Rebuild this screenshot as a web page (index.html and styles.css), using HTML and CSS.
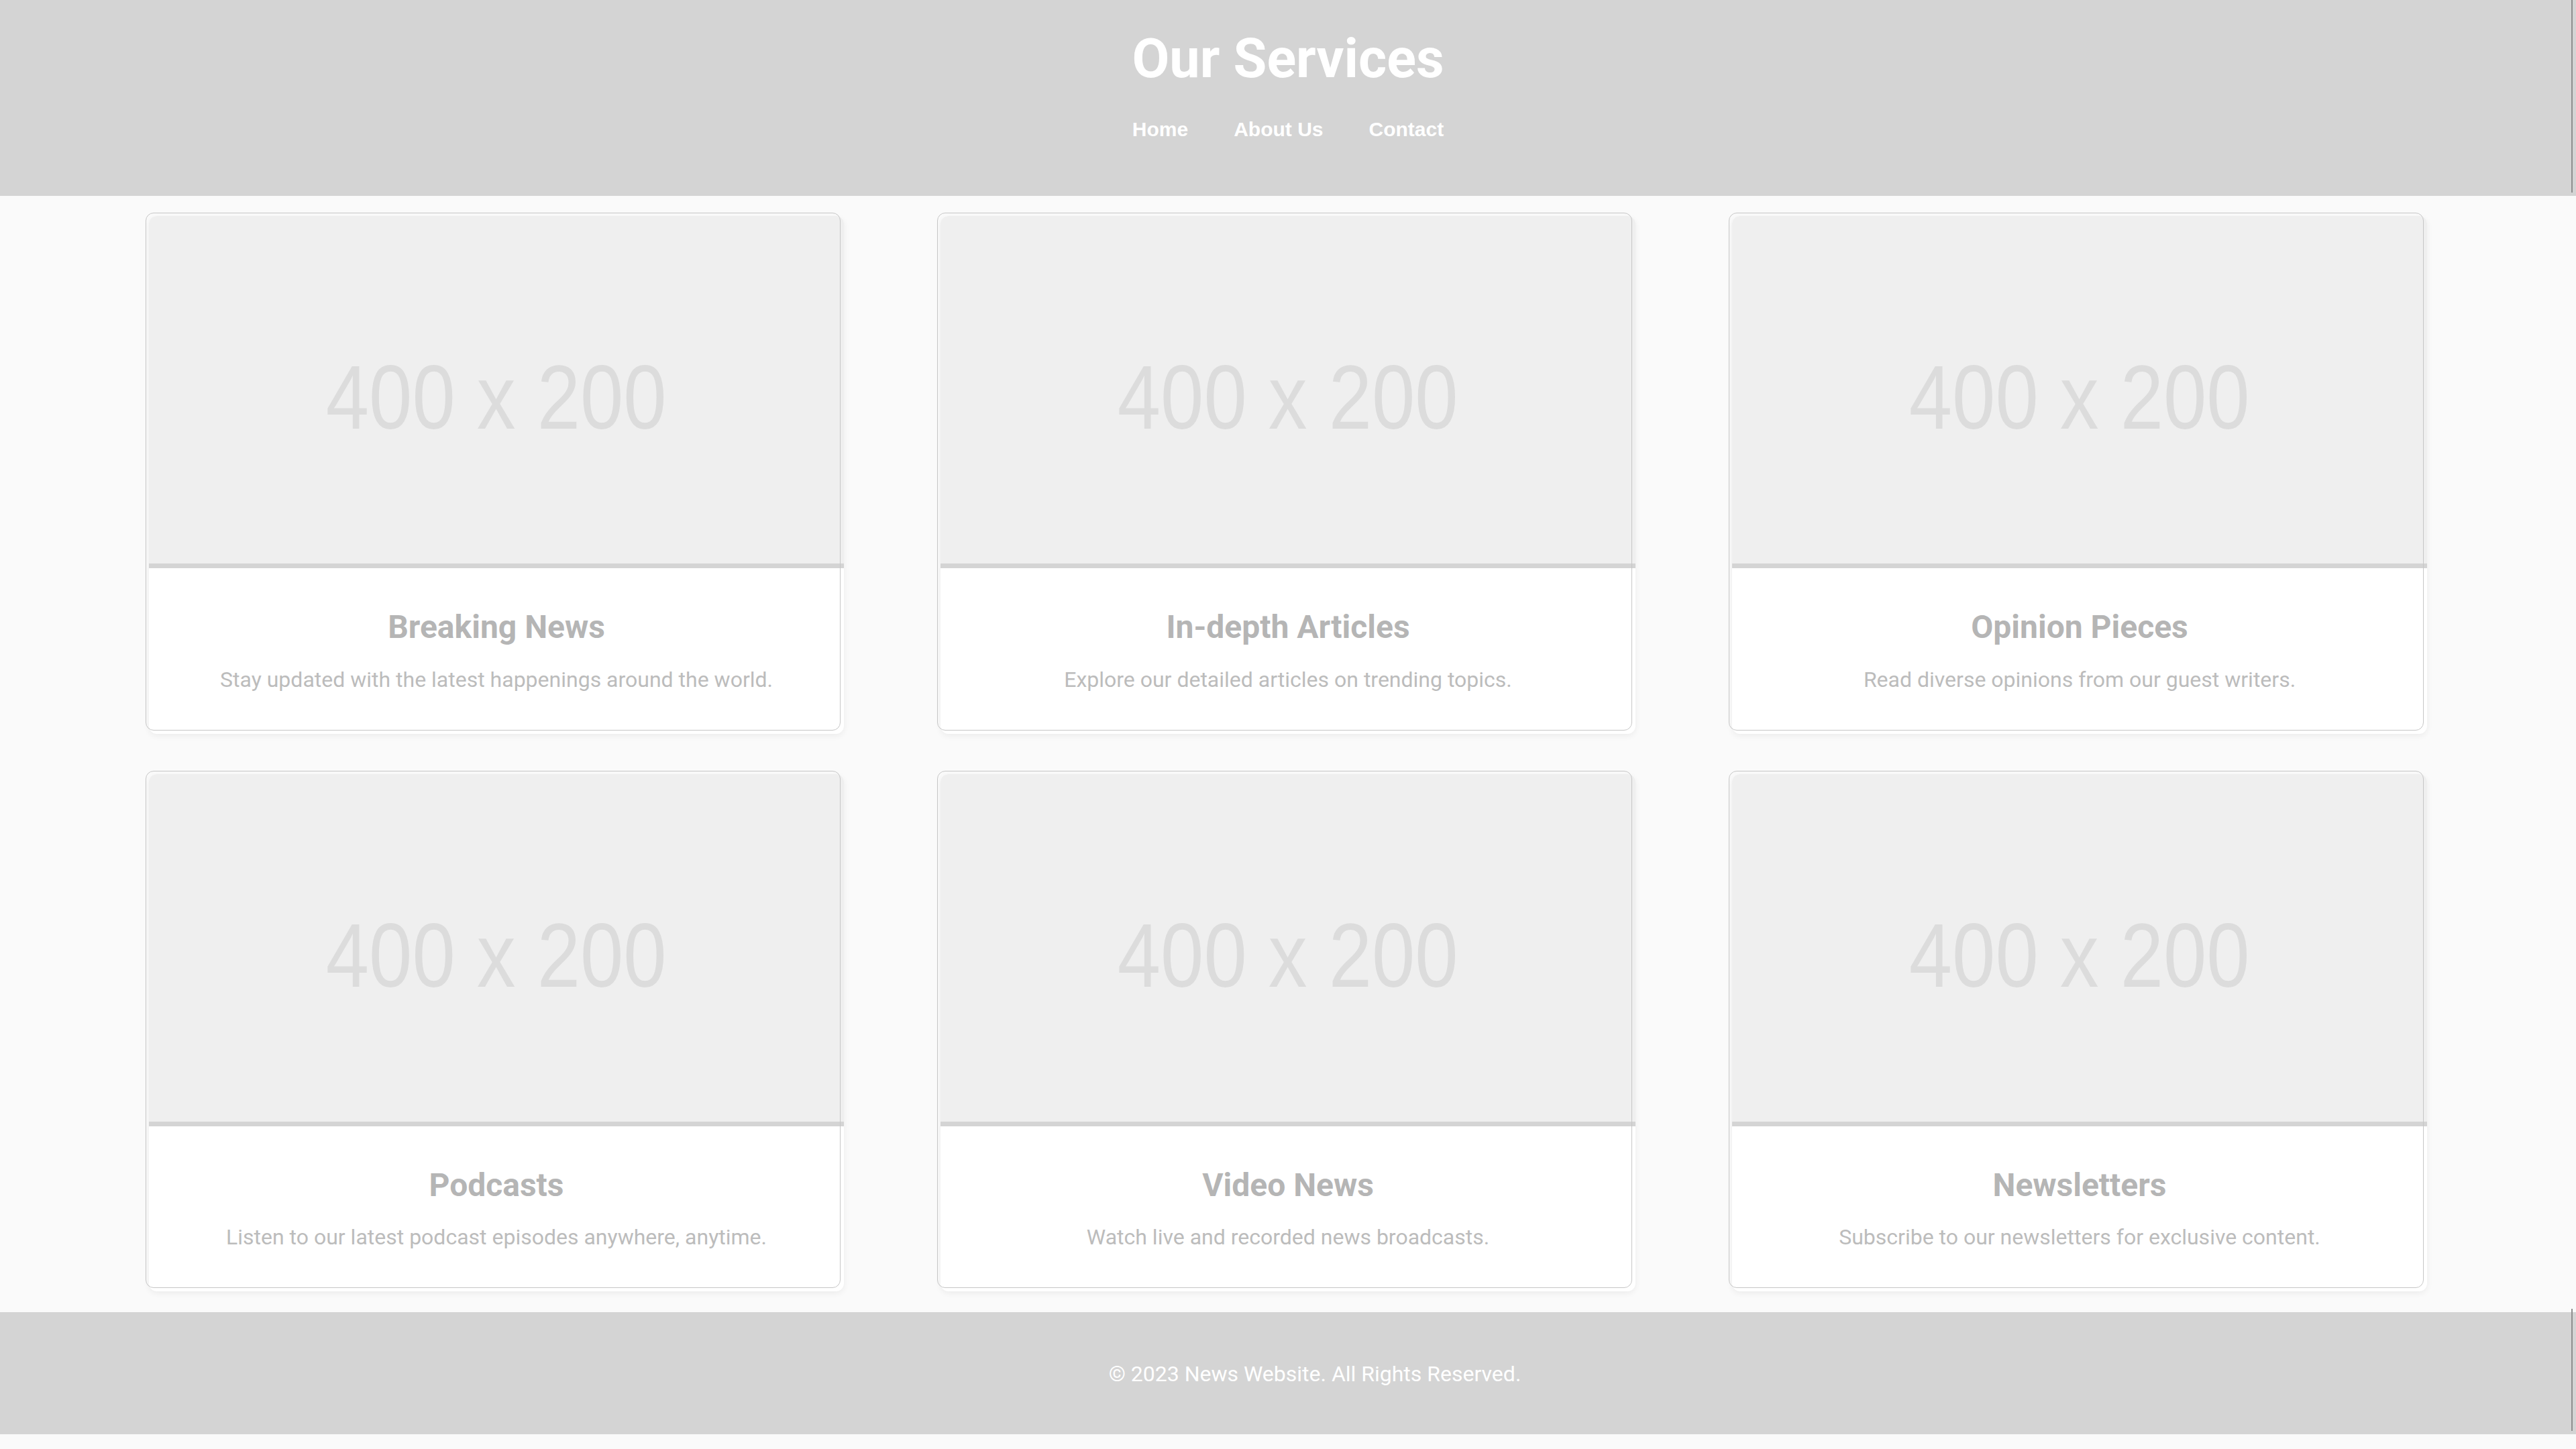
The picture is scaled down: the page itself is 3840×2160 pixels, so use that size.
FILE: index.html
```html
<!DOCTYPE html>
<html lang="en">
<head>
<meta charset="utf-8">
<title>Our Services</title>
<link rel="stylesheet" href="styles.css">
</head>
<body>
<header class="site-header">
  <h1 class="site-title">Our Services</h1>
  <nav class="site-nav">
    <a href="#">Home</a>
    <a href="#">About Us</a>
    <a href="#">Contact</a>
  </nav>
</header>
<main class="services">
  <article class="card">
    <div class="card-img"><span>400 x 200</span></div>
    <div class="card-body">
      <h2>Breaking News</h2>
      <p>Stay updated with the latest happenings around the world.</p>
    </div>
  </article>
  <article class="card">
    <div class="card-img"><span>400 x 200</span></div>
    <div class="card-body">
      <h2>In-depth Articles</h2>
      <p>Explore our detailed articles on trending topics.</p>
    </div>
  </article>
  <article class="card">
    <div class="card-img"><span>400 x 200</span></div>
    <div class="card-body">
      <h2>Opinion Pieces</h2>
      <p>Read diverse opinions from our guest writers.</p>
    </div>
  </article>
  <article class="card">
    <div class="card-img"><span>400 x 200</span></div>
    <div class="card-body">
      <h2>Podcasts</h2>
      <p>Listen to our latest podcast episodes anywhere, anytime.</p>
    </div>
  </article>
  <article class="card">
    <div class="card-img"><span>400 x 200</span></div>
    <div class="card-body">
      <h2>Video News</h2>
      <p>Watch live and recorded news broadcasts.</p>
    </div>
  </article>
  <article class="card">
    <div class="card-img"><span>400 x 200</span></div>
    <div class="card-body">
      <h2>Newsletters</h2>
      <p>Subscribe to our newsletters for exclusive content.</p>
    </div>
  </article>
</main>
<footer class="site-footer">
  <p>&copy; 2023 News Website. All Rights Reserved.</p>
</footer>
</body>
</html>
```
FILE: styles.css
```css
html, body {
  margin: 0;
  padding: 0;
}

body {
  background: #fafafa;
  font-family: Roboto, "Liberation Sans", Arial, sans-serif;
}

.site-header {
  position: relative;
  box-sizing: border-box;
  height: 292px;
  padding-top: 40px;
  background: #d4d4d4;
  text-align: center;
}

.site-header::after {
  content: "";
  position: absolute;
  top: 0;
  right: 5px;
  width: 2px;
  height: 287px;
  background: #8e8e8e;
}

.site-title {
  margin: 0;
  font-family: Roboto, "Liberation Sans", sans-serif;
  font-weight: 700;
  font-size: 81px;
  line-height: 95px;
  color: #ffffff;
}

.site-nav {
  margin-top: 41px;
  display: flex;
  justify-content: center;
  gap: 68px;
}

.site-nav a {
  font-family: "Liberation Sans", Arial, sans-serif;
  font-weight: 700;
  font-size: 30px;
  line-height: 34.5px;
  color: #ffffff;
  text-decoration: none;
}

.services {
  display: grid;
  grid-template-columns: repeat(3, 1fr);
  column-gap: 144px;
  row-gap: 60px;
  padding: 30px 222px 31px;
}

.card {
  position: relative;
  background: #ffffff;
  border-radius: 12px;
  box-shadow: 0 3px 10px rgba(0, 0, 0, 0.06);
}

.card::before {
  content: "";
  position: absolute;
  top: -5px;
  left: -5px;
  right: 5px;
  bottom: 5px;
  border: 1px solid #c6c6c6;
  border-radius: 12px;
  pointer-events: none;
  z-index: 1;
}

.card-img {
  box-sizing: border-box;
  height: 525px;
  padding-top: 22px;
  background: #efefef;
  border-bottom: 7px solid #d4d4d4;
  border-radius: 12px 12px 0 0;
  display: flex;
  align-items: center;
  justify-content: center;
}

.card-img span {
  display: inline-block;
  font-family: "Liberation Sans", Arial, sans-serif;
  font-size: 136px;
  line-height: 1;
  color: #dcdcdc;
  transform: scaleX(0.85);
}

.card-body {
  padding: 59px 40px 57px;
  text-align: center;
}

.card-body h2 {
  margin: 0 0 25px;
  font-family: Roboto, "Liberation Sans", sans-serif;
  font-weight: 700;
  font-size: 48px;
  line-height: 57.6px;
  color: #b5b5b5;
}

.card-body p {
  margin: 0;
  font-family: Roboto, "Liberation Sans", sans-serif;
  font-weight: 400;
  font-size: 32px;
  line-height: 48px;
  color: #bcbcbc;
}

.site-footer {
  position: relative;
  padding: 74px 0 70px 80px;
  background: #d4d4d4;
  text-align: center;
}

.site-footer::after {
  content: "";
  position: absolute;
  top: -5px;
  right: 5px;
  width: 2px;
  height: 182px;
  background: #8e8e8e;
}

.site-footer p {
  margin: 0;
  font-family: Roboto, "Liberation Sans", sans-serif;
  font-size: 32px;
  line-height: 37.5px;
  color: #ffffff;
}
```
